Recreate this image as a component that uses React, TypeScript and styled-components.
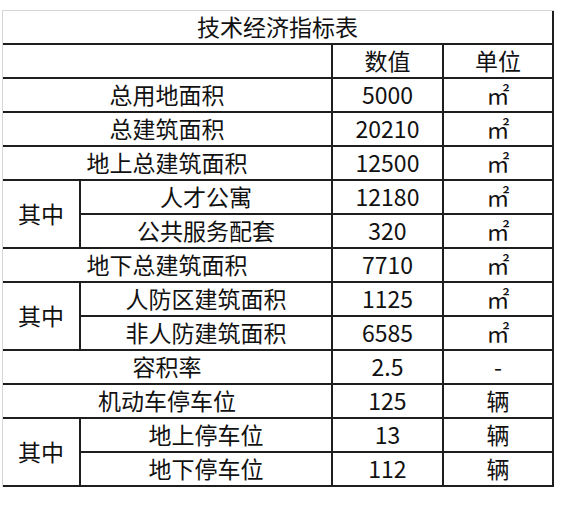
import React from "react";
import styled, { createGlobalStyle } from "styled-components";

const Global = createGlobalStyle`
  html, body { margin: 0; padding: 0; background: #ffffff; }
  body { font-family: "Noto Sans CJK SC", "Noto Sans", sans-serif; color: #000; }
`;

const Page = styled.div`
  padding: 10px 0 0 2px;
`;

const Table = styled.table`
  border-collapse: separate;
  border-spacing: 0;
  table-layout: fixed;
  width: 552px;
  border-left: 1px solid #d6d6d6;
  border-top: 1px solid #d6d6d6;
  font-size: 23px;
`;

const Row = styled.tr`
  height: 34px;
`;

const Cell = styled.td<{ $align?: "center" | "left" }>`
  padding: 0 0 2px 0;
  border-right: 2px solid #1e1e1e;
  border-bottom: 2px solid #1e1e1e;
  text-align: ${(p) => p.$align ?? "center"};
  vertical-align: middle;
  line-height: 30px;
  white-space: nowrap;
  color: #111;
`;

type Item =
  | { kind: "single"; label: string; value: string; unit: string }
  | { kind: "group"; items: { label: string; value: string; unit: string }[] };

const M2 = "㎡";

const data: Item[] = [
  { kind: "single", label: "总用地面积", value: "5000", unit: M2 },
  { kind: "single", label: "总建筑面积", value: "20210", unit: M2 },
  { kind: "single", label: "地上总建筑面积", value: "12500", unit: M2 },
  {
    kind: "group",
    items: [
      { label: "人才公寓", value: "12180", unit: M2 },
      { label: "公共服务配套", value: "320", unit: M2 },
    ],
  },
  { kind: "single", label: "地下总建筑面积", value: "7710", unit: M2 },
  {
    kind: "group",
    items: [
      { label: "人防区建筑面积", value: "1125", unit: M2 },
      { label: "非人防建筑面积", value: "6585", unit: M2 },
    ],
  },
  { kind: "single", label: "容积率", value: "2.5", unit: "-" },
  { kind: "single", label: "机动车停车位", value: "125", unit: "辆" },
  {
    kind: "group",
    items: [
      { label: "地上停车位", value: "13", unit: "辆" },
      { label: "地下停车位", value: "112", unit: "辆" },
    ],
  },
];

export default function App() {
  const rows: React.ReactNode[] = [];
  data.forEach((item, i) => {
    if (item.kind === "single") {
      rows.push(
        <Row key={`s${i}`}>
          <Cell colSpan={2}>{item.label}</Cell>
          <Cell>{item.value}</Cell>
          <Cell>{item.unit}</Cell>
        </Row>
      );
    } else {
      item.items.forEach((sub, j) => {
        rows.push(
          <Row key={`g${i}-${j}`}>
            {j === 0 && <Cell rowSpan={item.items.length}>其中</Cell>}
            <Cell>{sub.label}</Cell>
            <Cell>{sub.value}</Cell>
            <Cell>{sub.unit}</Cell>
          </Row>
        );
      });
    }
  });

  return (
    <Page>
      <Global />
      <Table>
        <colgroup>
          <col style={{ width: 78 }} />
          <col style={{ width: 252 }} />
          <col style={{ width: 111 }} />
          <col style={{ width: 110 }} />
        </colgroup>
        <tbody>
          <Row>
            <Cell colSpan={4}>技术经济指标表</Cell>
          </Row>
          <Row>
            <Cell colSpan={2}></Cell>
            <Cell>数值</Cell>
            <Cell>单位</Cell>
          </Row>
          {rows}
        </tbody>
      </Table>
    </Page>
  );
}
